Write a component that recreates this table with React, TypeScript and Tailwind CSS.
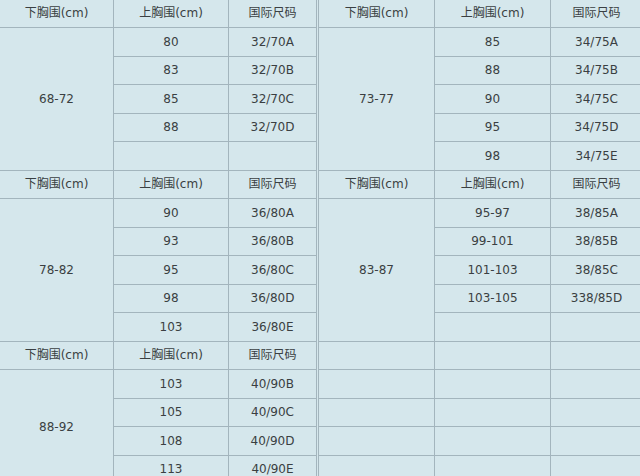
type Row = [string, string]

interface Group {
  label: string
  rows: Row[]
}

const leftGroups: Group[] = [
  {
    label: '68-72',
    rows: [['80', '32/70A'], ['83', '32/70B'], ['85', '32/70C'], ['88', '32/70D'], ['', '']],
  },
  {
    label: '78-82',
    rows: [['90', '36/80A'], ['93', '36/80B'], ['95', '36/80C'], ['98', '36/80D'], ['103', '36/80E']],
  },
  {
    label: '88-92',
    rows: [['103', '40/90B'], ['105', '40/90C'], ['108', '40/90D'], ['113', '40/90E']],
  },
]

const rightGroups: Group[] = [
  {
    label: '73-77',
    rows: [['85', '34/75A'], ['88', '34/75B'], ['90', '34/75C'], ['95', '34/75D'], ['98', '34/75E']],
  },
  {
    label: '83-87',
    rows: [['95-97', '38/85A'], ['99-101', '38/85B'], ['101-103', '38/85C'], ['103-105', '338/85D'], ['', '']],
  },
]

const cell = 'border border-[#a3b5bd] text-center align-middle font-normal p-0'

const SizeTable = ({ groups, widths, blankRows = 0 }: { groups: Group[]; widths: string[]; blankRows?: number }) => (
  <table className="table-fixed border-collapse shrink-0" style={{ width: widths.reduce((s, w) => s + parseInt(w), 0) }}>
    <colgroup>
      {widths.map((w, i) => (
        <col key={i} style={{ width: w }} />
      ))}
    </colgroup>
    <tbody>
      {groups.map((g) => [
        <tr key={g.label + '-h'} className="h-[28.5px]">
          <th className={cell}>下胸围(cm)</th>
          <th className={cell}>上胸围(cm)</th>
          <th className={cell}>国际尺码</th>
        </tr>,
        ...g.rows.map((r, i) => (
          <tr key={g.label + i} className="h-[28.5px]">
            {i === 0 && (
              <td rowSpan={g.rows.length} className={cell}>
                {g.label}
              </td>
            )}
            <td className={cell}>{r[0]}</td>
            <td className={cell}>{r[1]}</td>
          </tr>
        )),
      ])}
      {Array.from({ length: blankRows }).map((_, i) => (
        <tr key={'blank' + i} className="h-[28.5px]">
          <td className={cell}></td>
          <td className={cell}></td>
          <td className={cell}></td>
        </tr>
      ))}
    </tbody>
  </table>
)

export default function App() {
  return (
    <div
      className="w-[640px] h-[476px] overflow-hidden bg-[#d5e7ec] text-[#3a3f42] text-[12px]"
      style={{ fontFamily: '"DejaVu Sans", "Noto Sans CJK SC", sans-serif' }}
    >
      <div className="flex -mt-[1.5px] -ml-px gap-px">
        <SizeTable groups={leftGroups} widths={['114px', '115px', '88px']} />
        <SizeTable groups={rightGroups} widths={['116px', '116px', '92px']} blankRows={5} />
      </div>
    </div>
  )
}
